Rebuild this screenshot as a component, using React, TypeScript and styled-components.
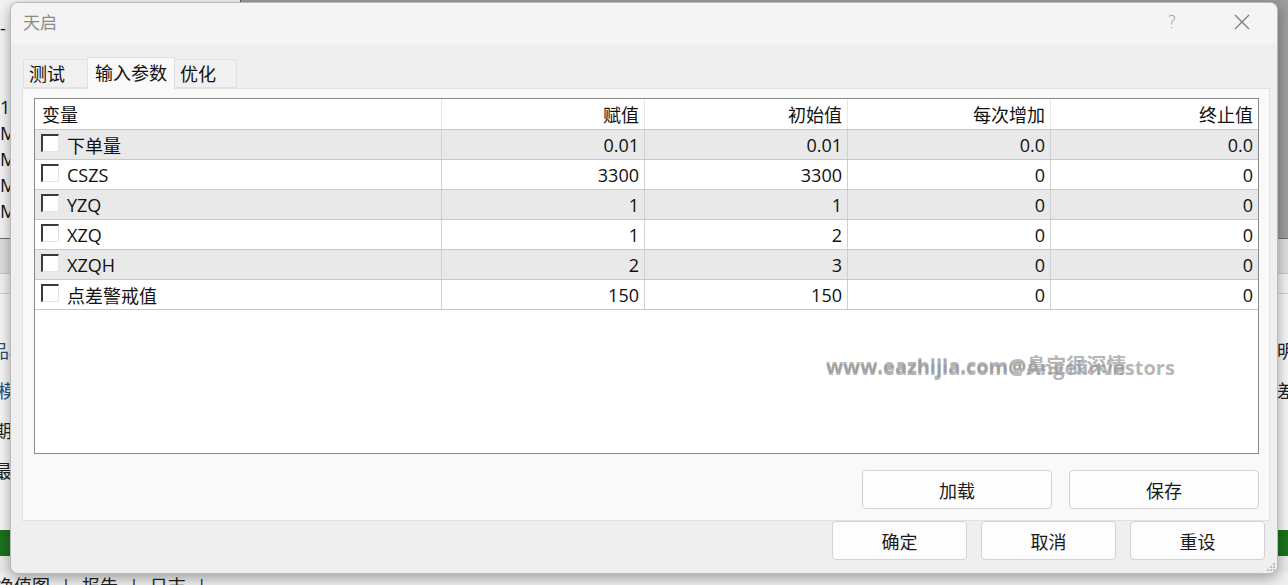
import React from "react";
import styled, { createGlobalStyle } from "styled-components";

const UI_FONT = `"Open Sans", "Noto Sans CJK SC", sans-serif`;

const GlobalStyle = createGlobalStyle`
  html, body {
    margin: 0;
    padding: 0;
    overflow: hidden;
    background: #f0f0f0;
  }
  body {
    font-family: ${UI_FONT};
  }
`;

type Param = {
  name: string;
  value: string;
  start: string;
  step: string;
  stop: string;
};

const params: Param[] = [
  { name: "下单量", value: "0.01", start: "0.01", step: "0.0", stop: "0.0" },
  { name: "CSZS", value: "3300", start: "3300", step: "0", stop: "0" },
  { name: "YZQ", value: "1", start: "1", step: "0", stop: "0" },
  { name: "XZQ", value: "1", start: "2", step: "0", stop: "0" },
  { name: "XZQH", value: "2", start: "3", step: "0", stop: "0" },
  { name: "点差警戒值", value: "150", start: "150", step: "0", stop: "0" },
];

/* ---------- terminal window behind the dialog ---------- */

const Desktop = styled.div`
  position: relative;
  width: 1288px;
  height: 585px;
  overflow: hidden;
  display: flex;
  flex-direction: column;
  background: #f0f0f0;
  font-family: ${UI_FONT};
  font-size: 18px;
  color: #111;
`;

const UpperArea = styled.div`
  display: flex;
  height: 238px;
  border-bottom: 1px solid #6f6f6f;
`;

const SymbolList = styled.div`
  width: 240px;
  background: #f4f4f4;
  border-right: 1px solid #555;
  display: flex;
  flex-direction: column;
`;

const ListCaption = styled.div`
  height: 56px;
  line-height: 56px;
  letter-spacing: 1px;
`;

const ListBody = styled.div`
  margin-top: 38px;
`;

const ListItem = styled.div`
  height: 26px;
  line-height: 26px;
`;

const ChartSpace = styled.div`
  flex: 1;
  background: #9d9d9d;
`;

const ToolStrip = styled.div`
  height: 34px;
  background: #dedede;
  border-bottom: 1px solid #c8c8c8;
`;

const SubStrip = styled.div`
  height: 19px;
  background: #f2f2f2;
  border-bottom: 1px solid #d0d0d0;
`;

const SettingsPane = styled.div`
  flex: 1;
  display: flex;
  justify-content: space-between;
  background: #f7f7f7;
`;

const LabelColumn = styled.div<{ $width: number }>`
  width: ${(p) => p.$width}px;
  padding-top: 37px;
  overflow: hidden;
`;

const SettingLabel = styled.div<{ $shift: number; $tint?: boolean }>`
  height: 40px;
  line-height: 40px;
  white-space: nowrap;
  margin-left: ${(p) => p.$shift}px;
  color: ${(p) => (p.$tint ? "#2a4f7a" : "#222")};
`;

const StatusGreen = styled.div`
  height: 26px;
  background: #1c721c;
`;

const StatusGap = styled.div`
  height: 16px;
  background: #ebebeb;
`;

const BottomTabs = styled.div`
  height: 11px;
  display: flex;
  gap: 11px;
  line-height: 24px;
  padding-top: 2px;
  margin-left: -4px;
  color: #222;
  white-space: nowrap;
`;

/* ---------- dialog ---------- */

const Dialog = styled.div`
  position: absolute;
  left: 10px;
  top: 2px;
  width: 1268px;
  height: 572px;
  box-sizing: border-box;
  border-radius: 8px;
  border: 1px solid rgba(0, 0, 0, 0.22);
  background: #efefef;
  box-shadow: 0 4px 14px rgba(0, 0, 0, 0.35);
  display: flex;
  flex-direction: column;
  overflow: hidden;
`;

const TitleBar = styled.div`
  height: 41px;
  display: flex;
  align-items: center;
  background: #f4f4f4;
`;

const Title = styled.div`
  flex: 1;
  padding: 0 0 4px 12px;
  font-size: 17px;
  color: #8a8a8a;
`;

const CaptionButton = styled.div`
  width: 70px;
  height: 41px;
  display: flex;
  align-items: center;
  justify-content: center;
  padding-bottom: 3px;
  box-sizing: border-box;
  color: #9a9a9a;
  font-family: "DejaVu Sans", sans-serif;
  font-weight: 200;
  font-size: 17px;
`;

const TabStrip = styled.div`
  display: flex;
  align-items: flex-end;
  height: 31px;
  margin: 13px 0 0 13px;
  position: relative;
  z-index: 1;
`;

const Tab = styled.div<{ $width: number; $active?: boolean }>`
  box-sizing: border-box;
  width: ${(p) => p.$width}px;
  height: ${(p) => (p.$active ? 32 : 29)}px;
  margin-bottom: ${(p) => (p.$active ? -1 : 0)}px;
  padding-left: ${(p) => (p.$active ? 7 : 5)}px;
  line-height: ${(p) => (p.$active ? 30 : 29)}px;
  font-size: 18px;
  color: #111;
  background: ${(p) => (p.$active ? "#f9f9f9" : "#f0f0f0")};
  border: 1px solid #e1e1e1;
  border-bottom: ${(p) => (p.$active ? "none" : "1px solid #e1e1e1")};
  margin-left: -1px;
`;

const TabPane = styled.div`
  height: 433px;
  box-sizing: border-box;
  margin: 0 7px 0 11px;
  padding: 9px 10px 0 11px;
  background: #f9f9f9;
  border: 1px solid #e1e1e1;
  display: flex;
  flex-direction: column;
`;

const TableBox = styled.div`
  position: relative;
  height: 356px;
  box-sizing: border-box;
  border: 1px solid #8a8a8a;
  background: #fff;
`;

const GridRow = styled.div<{ $shade?: boolean; $head?: boolean }>`
  display: grid;
  grid-template-columns: 407px 203px 203px 203px 1fr;
  height: ${(p) => (p.$head ? 31 : 30)}px;
  box-sizing: border-box;
  border-bottom: 1px solid #c8c8c8;
  background: ${(p) => (p.$shade ? "#e9e9e9" : "#fff")};
`;

const Cell = styled.div<{ $head?: boolean; $left?: boolean }>`
  display: flex;
  align-items: center;
  justify-content: ${(p) => (p.$left ? "flex-start" : "flex-end")};
  padding: ${(p) => (p.$left ? "0 0 0 6px" : "0 5px 0 0")};
  font-size: 18px;
  color: #111;
  border-right: 1px solid ${(p) => (p.$head ? "#e6e6e6" : "#d0d0d0")};
  white-space: nowrap;
  &:last-child {
    border-right: none;
  }
`;

const HeadLabel = styled.span`
  padding-left: 1px;
`;

const CheckBox = styled.span`
  width: 15px;
  height: 15px;
  margin: 0 8px 3px 0;
  background: #fff;
  border-top: 2px solid #3a3a3a;
  border-left: 2px solid #3a3a3a;
  border-right: 1px solid #e4e4e4;
  border-bottom: 1px solid #e4e4e4;
`;

const Watermark = styled.div<{ $lift: number }>`
  position: absolute;
  left: 791px;
  top: ${(p) => 257 - p.$lift}px;
  line-height: 24px;
  font-size: 20px;
  font-weight: 700;
  color: rgba(150, 150, 150, 0.7);
  white-space: nowrap;
  pointer-events: none;
`;

const PaneButtons = styled.div`
  display: flex;
  justify-content: flex-end;
  gap: 17px;
  margin-top: 16px;
`;

const PushButton = styled.button<{ $width: number }>`
  width: ${(p) => p.$width}px;
  height: 39px;
  box-sizing: border-box;
  border: 1px solid #d2d2d2;
  border-radius: 4px;
  background: #fdfdfd;
  font-family: ${UI_FONT};
  font-size: 18px;
  color: #1a1a1a;
  padding: 0;
`;

const Footer = styled.div`
  display: flex;
  justify-content: flex-end;
  gap: 14px;
  padding: 0 12px 0 0;
`;

const Grip = styled.svg`
  position: absolute;
  right: 1px;
  bottom: 1px;
`;

function CloseGlyph() {
  return (
    <svg width="16" height="16" viewBox="0 0 16 16">
      <path d="M1 1 L15 15 M15 1 L1 15" stroke="#7a7a7a" strokeWidth="1.2" fill="none" />
    </svg>
  );
}

function ParamTable() {
  return (
    <TableBox>
      <GridRow $head>
        <Cell $head $left>
          <HeadLabel>变量</HeadLabel>
        </Cell>
        <Cell $head>赋值</Cell>
        <Cell $head>初始值</Cell>
        <Cell $head>每次增加</Cell>
        <Cell $head>终止值</Cell>
      </GridRow>
      {params.map((p, i) => (
        <GridRow key={p.name} $shade={i % 2 === 0}>
          <Cell $left>
            <CheckBox />
            {p.name}
          </Cell>
          <Cell>{p.value}</Cell>
          <Cell>{p.start}</Cell>
          <Cell>{p.step}</Cell>
          <Cell>{p.stop}</Cell>
        </GridRow>
      ))}
      <Watermark $lift={0}>www.eazhijia.com@Angelinvestors</Watermark>
      <Watermark $lift={2}>www.eazhijia.com@鼻宝很深情</Watermark>
    </TableBox>
  );
}

export default function App() {
  return (
    <>
      <GlobalStyle />
      <Desktop>
        <UpperArea>
          <SymbolList>
            <ListCaption>-|</ListCaption>
            <ListBody>
              <ListItem>1</ListItem>
              <ListItem>M</ListItem>
              <ListItem>M</ListItem>
              <ListItem>M</ListItem>
              <ListItem>M</ListItem>
            </ListBody>
          </SymbolList>
          <ChartSpace />
        </UpperArea>
        <ToolStrip />
        <SubStrip />
        <SettingsPane>
          <LabelColumn $width={40}>
            <SettingLabel $shift={-9} $tint>品种</SettingLabel>
            <SettingLabel $shift={-2} $tint>模型</SettingLabel>
            <SettingLabel $shift={-6}>期间</SettingLabel>
            <SettingLabel $shift={-6}>最后</SettingLabel>
          </LabelColumn>
          <LabelColumn $width={12}>
            <SettingLabel $shift={1}>明细</SettingLabel>
            <SettingLabel $shift={1}>差价</SettingLabel>
          </LabelColumn>
        </SettingsPane>
        <StatusGreen />
        <StatusGap />
        <BottomTabs>
          <span>净值图</span>
          <span>|</span>
          <span>报告</span>
          <span>|</span>
          <span>日志</span>
          <span>|</span>
        </BottomTabs>

        <Dialog>
          <TitleBar>
            <Title>天启</Title>
            <CaptionButton>?</CaptionButton>
            <CaptionButton>
              <CloseGlyph />
            </CaptionButton>
          </TitleBar>
          <TabStrip>
            <Tab $width={65}>测试</Tab>
            <Tab $width={88} $active>
              输入参数
            </Tab>
            <Tab $width={63}>优化</Tab>
          </TabStrip>
          <TabPane>
            <ParamTable />
            <PaneButtons>
              <PushButton $width={190}>加载</PushButton>
              <PushButton $width={190}>保存</PushButton>
            </PaneButtons>
          </TabPane>
          <Footer>
            <PushButton $width={135}>确定</PushButton>
            <PushButton $width={135}>取消</PushButton>
            <PushButton $width={135}>重设</PushButton>
          </Footer>
          <Grip width="10" height="10" viewBox="0 0 10 10">
            <rect x="7" y="1" width="2" height="2" fill="#bdbdbd" />
            <rect x="4" y="4" width="2" height="2" fill="#bdbdbd" />
            <rect x="7" y="4" width="2" height="2" fill="#bdbdbd" />
            <rect x="1" y="7" width="2" height="2" fill="#bdbdbd" />
            <rect x="4" y="7" width="2" height="2" fill="#bdbdbd" />
            <rect x="7" y="7" width="2" height="2" fill="#bdbdbd" />
          </Grip>
        </Dialog>
      </Desktop>
    </>
  );
}
